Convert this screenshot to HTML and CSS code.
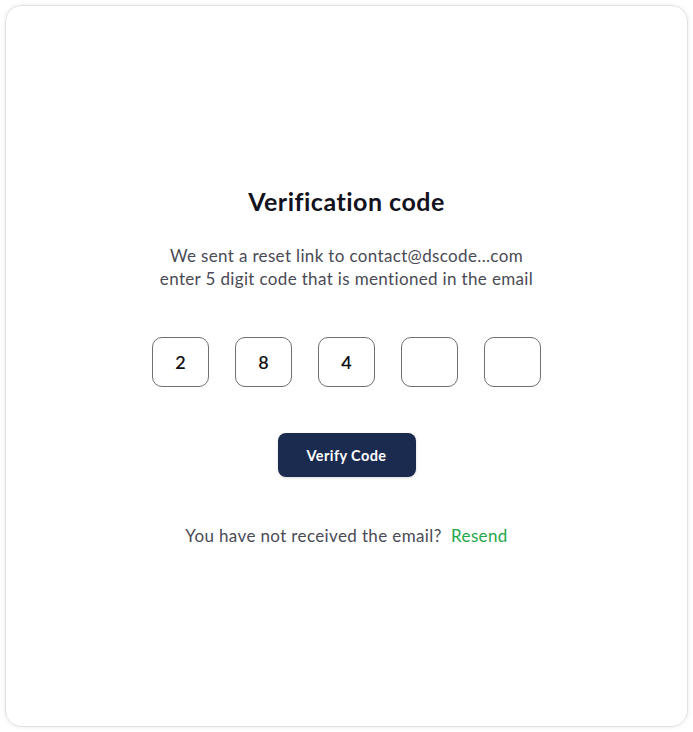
FILE: index.html
```html
<!DOCTYPE html>
<html>
<head>
<meta charset="utf-8">
<link rel="stylesheet" href="styles.css">
</head>
<body>
<div class="card">
  <h1 class="title">Verification code</h1>
  <p class="subtitle">We sent a reset link to contact@dscode...com<br>enter 5 digit code that is mentioned in the email</p>
  <div class="codes">
    <div class="code">2</div>
    <div class="code">8</div>
    <div class="code">4</div>
    <div class="code"></div>
    <div class="code"></div>
  </div>
  <button class="btn">Verify Code</button>
  <p class="resend">You have not received the email?&nbsp;&nbsp;<a class="link">Resend</a></p>
</div>
</body>
</html>
```
FILE: styles.css
```css
html, body { margin: 0; padding: 0; background: #fff; }
body { font-family: "Lato", "Open Sans", sans-serif; }
.card {
  box-sizing: border-box;
  margin: 5px;
  width: 683px;
  height: 722px;
  border: 1px solid #e2e2e2;
  border-radius: 16px;
  box-shadow: 0 0 4px rgba(0,0,0,0.08);
  display: flex;
  flex-direction: column;
  align-items: center;
  justify-content: center;
}
.title {
  margin: 0 0 4px;
  font-size: 25px;
  font-weight: 700;
  letter-spacing: 0.5px;
  color: #121220;
  line-height: 30px;
}
.subtitle {
  margin: 24px 0 0;
  font-size: 17px;
  letter-spacing: 0.35px;
  line-height: 23px;
  color: #4a4a55;
  text-align: center;
}
.codes {
  margin-top: 47px;
  display: flex;
  gap: 26px;
}
.code {
  box-sizing: border-box;
  width: 57px;
  height: 50px;
  border: 1px solid #707070;
  border-radius: 10px;
  display: flex;
  align-items: center;
  justify-content: center;
  font-size: 18px;
  font-weight: 600;
  color: #111;
}
.btn {
  margin-top: 46px;
  width: 138px;
  height: 44px;
  border: none;
  border-radius: 8px;
  background: #1b2b4f;
  color: #fff;
  font-family: inherit;
  font-weight: 700;
  font-size: 14.5px;
  letter-spacing: 0.4px;
  box-shadow: 0 1px 3px rgba(0,0,0,0.15);
}
.resend {
  margin: 48px 0 0;
  font-size: 17px;
  letter-spacing: 0.37px;
  color: #4a4a55;
}
.link { color: #1fa84a; }
```
